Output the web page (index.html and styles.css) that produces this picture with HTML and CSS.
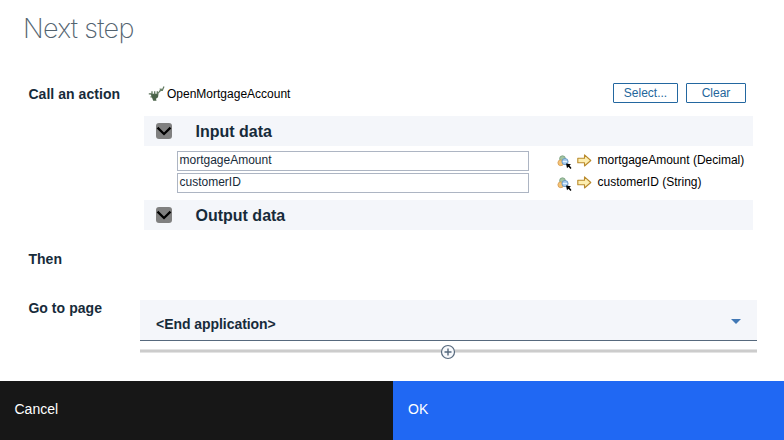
FILE: index.html
```
<!DOCTYPE html>
<html lang="en">
<head>
<meta charset="utf-8">
<title>Next step</title>
<link rel="stylesheet" href="styles.css">
</head>
<body>
<svg class="defs" width="0" height="0" aria-hidden="true">
  <symbol id="chevron" viewBox="0 0 16 16">
    <rect width="16" height="16" rx="3" fill="#808080"/>
    <path d="M1.500 4.700 8 11l6.500-6.300" fill="none" stroke="#000" stroke-width="2.300"/>
  </symbol>
  <symbol id="picker" viewBox="0 0 15 15">
    <circle cx="5.500" cy="3.700" r="2.900" fill="#a3c4a2" stroke="#769d7d" stroke-width=".8"/>
    <circle cx="3.800" cy="7.800" r="2.900" fill="#f5c477" stroke="#d49a50" stroke-width=".8"/>
    <circle cx="8" cy="6.600" r="3.100" fill="#a9cdee" stroke="#5b8dbd" stroke-width=".8"/>
    <path d="M6 6.600h4" stroke="#e9f4fc"/>
    <path d="M9 8.500l5 .8-1.500 1.300 2 2.300-1 1-2.100-2.200-1.400 1.500z" fill="#000"/>
  </symbol>
  <symbol id="arrow" viewBox="0 0 15 13">
    <path d="M.8 4.300H7.500V.9L13.800 6.500 7.500 12V8.700H.8z" fill="#fdeeb0" stroke="#b98a2c" stroke-width="1.100" stroke-linejoin="round"/>
  </symbol>
</svg>
<main class="dialog">
  <h1 class="title">Next step</h1>
  <section class="field action">
    <h2 class="label">Call an action</h2>
    <div class="content">
      <div class="action-head">
        <svg class="plug" viewBox="0 0 17 17">
          <path d="M.8 8.800h3M2.500 11.800h2" stroke="#5b725a" stroke-width="1.300"/>
          <path d="M2.500 8.800h8l-.5 3.400-2 1.500.5 2H5.200L4 12.500z" fill="#4b644a"/>
          <path d="M4 9.500V6.300M6.700 9.500V6.300M9.300 9.500V6.300" stroke="#60785f" stroke-width="1.300"/>
          <path d="M10 8.500l2.300-3.200h2L16 1.500" fill="none" stroke="#60785f" stroke-width="1.200"/>
          <path d="M11.500 3.500l3.200.3-2.200 3z" fill="#6c846a"/>
        </svg>
        <span class="action-name">OpenMortgageAccount</span>
        <button class="btn select">Select...</button>
        <button class="btn clear">Clear</button>
      </div>
      <div class="section-bar"><svg class="chevron"><use href="#chevron"/></svg><h3>Input data</h3></div>
      <div class="params">
        <div class="param">
          <span class="input">mortgageAmount</span>
          <svg class="picker"><use href="#picker"/></svg>
          <svg class="arrow"><use href="#arrow"/></svg>
          <span class="type">mortgageAmount (Decimal)</span>
        </div>
        <div class="param">
          <span class="input">customerID</span>
          <svg class="picker"><use href="#picker"/></svg>
          <svg class="arrow"><use href="#arrow"/></svg>
          <span class="type">customerID (String)</span>
        </div>
      </div>
      <div class="section-bar"><svg class="chevron"><use href="#chevron"/></svg><h3>Output data</h3></div>
    </div>
  </section>
  <section class="field then"><h2 class="label">Then</h2></section>
  <section class="field goto">
    <h2 class="label">Go to page</h2>
    <div class="page-choice">
      <div class="dropdown">
        <span>&lt;End application&gt;</span>
        <svg class="caret" viewBox="0 0 10 5"><path d="M0 0h10L5 5z" fill="#4178b5"/></svg>
      </div>
      <div class="divider">
        <svg class="add" viewBox="0 0 16 16"><circle cx="8" cy="8" r="6.500" fill="#f7f9fc" stroke="#56697d" stroke-width="1.200"/><path d="M8 4.500v7M4.500 8h7" stroke="#56697d" stroke-width="1.400"/></svg>
      </div>
    </div>
  </section>
  <footer class="footer">
    <button class="cancel">Cancel</button>
    <button class="ok">OK</button>
  </footer>
</main>
</body>
</html>
```
FILE: styles.css
```
* { box-sizing: border-box; }
body { margin: 0; background: #fff; font: 12px/16px "Liberation Sans", Arial, sans-serif; color: #000; }
h1, h2, h3 { margin: 0; }
svg { display: block; flex: none; }
button { margin: 0; font-family: inherit; }
.defs { position: absolute; }
.dialog { display: flex; flex-direction: column; width: 784px; height: 440px; overflow: hidden; }
.title { height: 80px; padding: 11px 0 0 23px; font: 200 27px/36px Inter, sans-serif; letter-spacing: -0.7px; color: #53636f; }
.field { display: flex; padding-left: 28px; }
.label { font-size: 14px; line-height: 18px; letter-spacing: 0.05px; text-indent: 0.4px; color: #172b3a; white-space: nowrap; }
.action { height: 170px; }
.action .label { width: 116px; padding-top: 5px; }
.content { width: 609px; }
.action-head { display: flex; align-items: center; height: 36px; padding: 0 7px 10px 4px; }
.plug { width: 17px; height: 17px; margin-right: 2px; }
.action-name { margin-right: auto; padding-top: 1px; }
.btn { height: 20px; padding: 0; border: 1px solid #2367a0; border-radius: 1px; background: #fff; color: #23669b; font-size: 12px; line-height: 18px; }
.select { width: 65px; margin-right: 8px; }
.clear { width: 60px; }
.section-bar { display: flex; align-items: center; height: 30px; padding-left: 12px; background: #f4f6fa; }
.chevron { width: 16px; height: 16px; margin-right: 23px; }
.section-bar h3 { padding-top: 2px; text-indent: 0.5px; font-size: 16px; line-height: 20px; color: #172b3a; }
.params { display: flex; flex-direction: column; gap: 2px; height: 54px; padding: 5px 0 0 33px; }
.param { display: flex; align-items: center; height: 20px; }
.input { width: 352px; height: 20px; margin-right: 28px; padding-left: 1.5px; border: 1px solid #adb5c3; color: #172b3a; line-height: 17px; }
.picker { width: 15px; height: 15px; margin: 3px 5px 0 0; }
.arrow { width: 15px; height: 13px; margin: 0 5px 1px 0; }
.type { padding-bottom: 2px; text-indent: 0.5px; line-height: 18px; white-space: nowrap; }
.then { height: 50px; }
.goto { height: 81px; }
.goto .label { width: 112px; margin-top: -1px; }
.page-choice { width: 617px; }
.dropdown { display: flex; align-items: center; justify-content: space-between; height: 41px; padding: 7px 16px 0 16px; border-bottom: 1px solid #56697d; background: #f4f6fa; color: #172b3a; font-size: 14px; font-weight: bold; }
.dropdown span { padding-top: 1px; letter-spacing: -0.05px; }
.caret { width: 10px; height: 5px; margin-bottom: 5px; }
.divider { display: flex; align-items: center; justify-content: center; height: 4px; margin-top: 8px; border: solid #e3e3e3; border-width: 1px 0; background: #ccc; }
.add { width: 16px; height: 16px; margin: 2px 1px 0 0; }
.footer { display: flex; height: 59px; }
.footer button { padding: 0 15px 3px; border: 0; text-align: left; font-size: 14px; color: #fff; }
.footer .cancel { width: 393px; padding-left: 14.500px; background: #171717; }
.ok { width: 391px; background: #2068f3; }
```
